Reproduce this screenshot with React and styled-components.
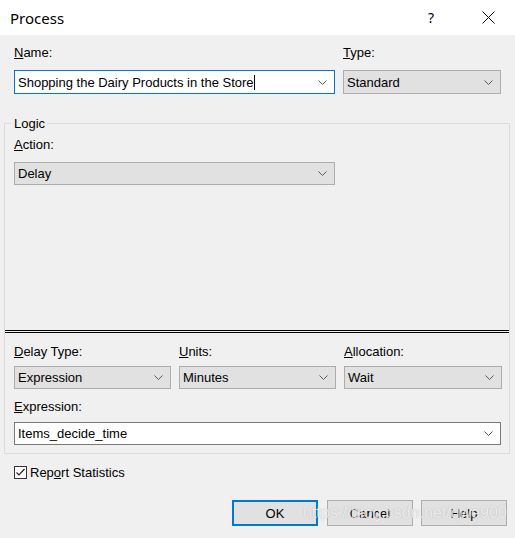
import styled, { createGlobalStyle } from "styled-components";

const Global = createGlobalStyle`
  body {
    margin: 0;
    background: #f0f0f0;
    font-family: "Liberation Sans", Arial, sans-serif;
    font-size: 13px;
    color: #000;
  }
`;

const Dialog = styled.div`
  position: relative;
  width: 515px;
  height: 538px;
  background: #f0f0f0;
  display: flex;
  flex-direction: column;
  overflow: hidden;
`;

const TitleBar = styled.div`
  height: 35px;
  background: #fff;
  display: flex;
  align-items: center;
  padding-left: 10px;
`;

const Title = styled.div`
  font-family: "Noto Sans", "Open Sans", sans-serif;
  font-size: 15px;
  color: #000;
`;

const TitleButton = styled.div`
  width: 46px;
  height: 35px;
  display: flex;
  align-items: center;
  justify-content: center;
  font-family: "Noto Sans", sans-serif;
  font-size: 14px;
  margin-left: ${(p) => p.$ml || 0}px;
`;

const Body = styled.div`
  display: flex;
  flex-direction: column;
`;

const TopRow = styled.div`
  display: grid;
  grid-template-columns: 321px 158px;
  column-gap: 8px;
  margin: 10px 14px 0;
`;

const Field = styled.div`
  display: flex;
  flex-direction: column;
  gap: ${(p) => p.$gap ?? 10}px;
`;

const Label = styled.div`
  line-height: 15px;
  height: 15px;
  u {
    text-decoration: underline;
  }
`;

const Combo = styled.div`
  height: ${(p) => p.$h || 23}px;
  box-sizing: border-box;
  display: flex;
  align-items: center;
  padding: 0 7px 0 3px;
  background: ${(p) => (p.$edit ? "#fff" : "#e1e1e1")};
  border: 1px solid
    ${(p) => (p.$focus ? "#0078d7" : p.$edit ? "#7a7a7a" : "#adadad")};
`;

const ComboText = styled.span`
  flex: 1;
  white-space: nowrap;
  display: flex;
  align-items: center;
`;

const Caret = styled.span`
  display: inline-block;
  width: 1px;
  height: 15px;
  background: #000;
`;

const Group = styled.fieldset`
  margin: 22px 5px 0 4px;
  padding: 6px 8px 8px 9px;
  border: 1px solid #dcdcdc;
  min-width: 0;
`;

const Legend = styled.legend`
  padding: 0 2px;
  margin-left: -2px;
  line-height: 15px;
`;

const Divider = styled.div`
  height: 1px;
  border-top: 1px solid #000;
  border-bottom: 1px solid #000;
  margin: ${(p) => p.$top}px -8px 0 -9px;
`;

const ThreeRow = styled.div`
  display: grid;
  grid-template-columns: 157px 157px 158px;
  column-gap: 8px;
  margin-top: 11px;
`;

const CheckRow = styled.label`
  display: flex;
  align-items: center;
  gap: 3px;
  margin: 11px 14px 0;
  line-height: 15px;
`;

const Box = styled.span`
  width: 13px;
  height: 13px;
  box-sizing: border-box;
  border: 1px solid #333;
  background: #fff;
  display: flex;
  align-items: center;
  justify-content: center;
`;

const Buttons = styled.div`
  display: flex;
  justify-content: flex-end;
  gap: 8px;
  margin: 20px 8px 0 0;
`;

const Button = styled.div`
  width: 86px;
  height: 26px;
  box-sizing: border-box;
  background: #e1e1e1;
  border: ${(p) => (p.$default ? "2px solid #0078d7" : "1px solid #adadad")};
  display: flex;
  align-items: center;
  justify-content: center;
  font-size: 13px;
  margin-right: ${(p) => p.$mr || 0}px;
`;

const Watermark = styled.div`
  position: absolute;
  left: 303px;
  top: 504px;
  font-family: "Liberation Sans", Arial, sans-serif;
  font-size: 16px;
  white-space: nowrap;
  color: rgba(255, 255, 255, 0.75);
  text-shadow: 0 0 1px rgba(120, 120, 120, 0.5);
  pointer-events: none;
`;

function Chevron() {
  return (
    <svg width="9" height="5" viewBox="0 0 9 5">
      <polyline points="0.5,0.5 4.5,4.5 8.5,0.5" fill="none" stroke="#5a5a5a" strokeWidth="1" />
    </svg>
  );
}

function Select({ children, edit, focus, h }) {
  return (
    <Combo $edit={edit} $focus={focus} $h={h}>
      <ComboText>{children}</ComboText>
      <Chevron />
    </Combo>
  );
}

export default function App() {
  return (
    <Dialog>
      <Global />
      <TitleBar>
        <Title>Process</Title>
        <TitleButton $ml={344}>?</TitleButton>
        <TitleButton $ml={11}>
          <svg width="13" height="13" viewBox="0 0 13 13">
            <path d="M0.5 0.5 L12.5 12.5 M12.5 0.5 L0.5 12.5" stroke="#111" strokeWidth="1" />
          </svg>
        </TitleButton>
      </TitleBar>
      <Body>
        <TopRow>
          <Field>
            <Label><u>N</u>ame:</Label>
            <Select edit focus h={24}>
              Shopping the Dairy Products in the Store<Caret />
            </Select>
          </Field>
          <Field>
            <Label><u>T</u>ype:</Label>
            <Select h={24}>Standard</Select>
          </Field>
        </TopRow>
        <Group>
          <Legend>Logic</Legend>
          <Field style={{ width: 321 }}>
            <Label><u>A</u>ction:</Label>
            <Select>Delay</Select>
          </Field>
          <Divider $top={145} />
          <ThreeRow>
            <Field $gap={7}>
              <Label><u>D</u>elay Type:</Label>
              <Select>Expression</Select>
            </Field>
            <Field $gap={7}>
              <Label><u>U</u>nits:</Label>
              <Select>Minutes</Select>
            </Field>
            <Field $gap={7}>
              <Label><u>A</u>llocation:</Label>
              <Select>Wait</Select>
            </Field>
          </ThreeRow>
          <Field $gap={8} style={{ marginTop: 10 }}>
            <Label><u>E</u>xpression:</Label>
            <Select edit>Items_decide_time</Select>
          </Field>
        </Group>
        <CheckRow>
          <Box>
            <svg width="11" height="11" viewBox="0 0 11 11">
              <polyline points="1.5,5.5 4,8 9.5,2" fill="none" stroke="#222" strokeWidth="1.2" />
            </svg>
          </Box>
          <span>Rep<u>o</u>rt Statistics</span>
        </CheckRow>
        <Buttons>
          <Button $default $mr={1}>OK</Button>
          <Button>Cancel</Button>
          <Button>Help</Button>
        </Buttons>
      </Body>
      <Watermark>https://blog.csdn.net/qwe900</Watermark>
    </Dialog>
  );
}
